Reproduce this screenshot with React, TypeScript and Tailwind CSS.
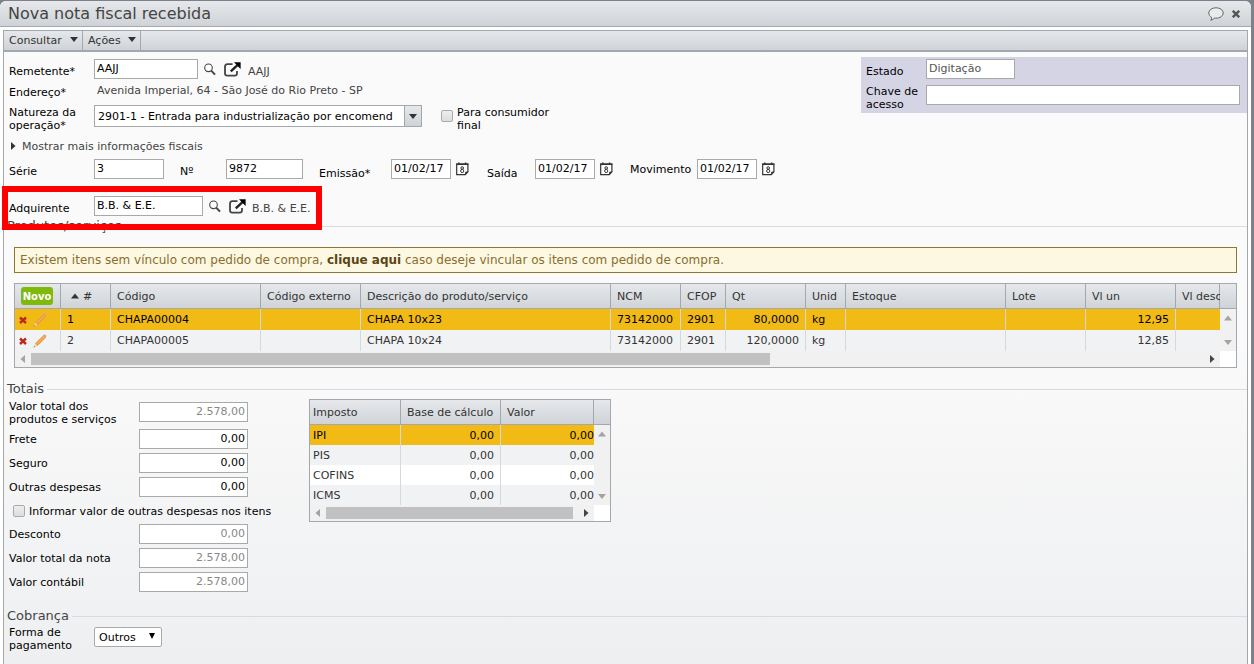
import { useState, type ReactNode } from 'react';
import clsx from 'clsx';

const productColumns = [
  { title: 'Código', width: 'w-[150px]' },
  { title: 'Código externo', width: 'w-[100px]' },
  { title: 'Descrição do produto/serviço', width: 'w-[250px]' },
  { title: 'NCM', width: 'w-[70px]' },
  { title: 'CFOP', width: 'w-[45px]' },
  { title: 'Qt', width: 'w-[80px]' },
  { title: 'Unid', width: 'w-[40px]' },
  { title: 'Estoque', width: 'w-[160px]' },
  { title: 'Lote', width: 'w-[80px]' },
  { title: 'Vl un', width: 'w-[90px]' },
  { title: 'Vl desc', width: '' },
];

const products = [
  ['1', 'CHAPA00004', '', 'CHAPA 10x23', '73142000', '2901', '80,0000', 'kg', '', '', '12,95', ''],
  ['2', 'CHAPA00005', '', 'CHAPA 10x24', '73142000', '2901', '120,0000', 'kg', '', '', '12,85', ''],
];

const taxes = ['IPI', 'PIS', 'COFINS', 'ICMS'];

const bar = 'bg-linear-to-b from-[#e6e8eb] to-[#cfd3d7]';
const field = 'h-5 border border-[#a9a9a9] bg-white px-0.5 pb-0.5 outline-none';

function Search() {
  return (
    <button type="button" aria-label="Pesquisar" className="shrink-0">
      <svg width="12" height="13" viewBox="0 0 12 13" fill="none" stroke="#444">
        <circle cx="4.5" cy="4.8" r="3.8" strokeWidth="1.1" fill="#fff" />
        <path d="M7.2 7.6 11 11.6" strokeWidth="2" />
      </svg>
    </button>
  );
}

function OpenExternal() {
  return (
    <button type="button" aria-label="Abrir cadastro" className="shrink-0">
      <svg width="17" height="15" viewBox="0 0 17 15" fill="none" stroke="#222">
        <path d="M8.5 2.2H3.4Q1 2.2 1 4.6v6.600q0 2.4 2.4 2.4h7.200q2.4 0 2.4-2.4V9" stroke="#444" strokeWidth="1.8" />
        <path d="M6.8 9.3 14 2.600" strokeWidth="2.4" />
        <path d="M10 0.3h6.600v6.600z" fill="#000" stroke="none" />
      </svg>
    </button>
  );
}

function Calendar({ label }: { label: string }) {
  return (
    <button type="button" aria-label={label} className="ml-[5px] shrink-0">
      <svg width="13" height="14" viewBox="0 0 13 14" fill="none" stroke="#333">
        <path d="M.7 2.2h11.2v7.6l-2.600 2.900H.7z" fill="#fff" strokeWidth="1.2" />
        <path d="M.2 2.2h12.2M2.8.4v2.4M9.6.4v2.4" strokeWidth="1.4" />
        <path d="m9.3 12.7.2-2.600 2.4-.3z" fill="#333" strokeWidth=".6" />
        <circle cx="6.2" cy="6" r="1.3" />
        <circle cx="6.2" cy="9" r="1.6" />
      </svg>
    </button>
  );
}

function Triangle({ dir, className }: { dir: 'up' | 'down' | 'left' | 'right'; className?: string }) {
  const points = {
    up: '0,6.5 4,1.5 8,6.5',
    down: '0,2 8,2 4,7',
    left: '6,0 6,8 1.5,4',
    right: '2,0 2,8 6.5,4',
  };
  return (
    <svg width="8" height="8" viewBox="0 0 8 8" className={clsx('shrink-0', className)} fill="currentColor">
      <polygon points={points[dir]} />
    </svg>
  );
}

function MenuButton({ children, className }: { children: ReactNode; className: string }) {
  return (
    <button
      type="button"
      className={clsx('flex items-center justify-between border-r border-[#a2a8ae] pr-1 pl-[5px] text-[#333]', className)}
    >
      {children}
      <svg width="8" height="6" viewBox="0 0 8 6" className="mb-0.5 fill-[#333]">
        <path d="M0 0h8L4 5z" />
      </svg>
    </button>
  );
}

function SectionTitle({ children, className }: { children: ReactNode; className?: string }) {
  return (
    <div className={clsx('flex h-4 items-center gap-[3px] pl-[3px]', className)}>
      <h2 className="text-[13px] leading-4 text-[#444]">{children}</h2>
      <div className="h-px flex-1 bg-[#d8dbdf]" />
    </div>
  );
}

function Checkbox({ id }: { id: string }) {
  return (
    <input
      id={id}
      type="checkbox"
      className="block size-3 shrink-0 appearance-none rounded-xs border border-[#aaa] bg-linear-to-b from-[#eee] to-[#ddd] checked:bg-[#888]"
    />
  );
}

function DateField({ id, label, labelClass }: { id: string; label: string; labelClass: string }) {
  return (
    <>
      <label htmlFor={id} className={clsx('shrink-0', labelClass)}>{label}</label>
      <input id={id} defaultValue="01/02/17" className={clsx(field, 'w-[60px]')} />
      <Calendar label={`Calendário ${label}`} />
    </>
  );
}

function AmountField({ id, label, value, disabled }: { id: string; label: string; value: string; disabled?: boolean }) {
  return (
    <div className="flex h-6">
      <label htmlFor={id} className="w-[130px] shrink-0 pt-1">{label}</label>
      <input
        id={id}
        defaultValue={value}
        disabled={disabled}
        className={clsx(field, 'w-[109px] text-right', disabled && 'text-[#888]')}
      />
    </div>
  );
}

function HorizontalScroll({ thumb }: { thumb: string }) {
  return (
    <div className="flex h-4 items-center bg-[#f1f1f1] px-1">
      <Triangle dir="left" className="text-[#a3a3a3]" />
      <div className="mx-1 flex h-3 flex-1">
        <div className={clsx('bg-[#c1c1c1]', thumb)} />
      </div>
      <Triangle dir="right" className="text-[#444]" />
    </div>
  );
}

function VerticalScroll() {
  return (
    <div className="flex w-4 shrink-0 flex-col">
      <div className={clsx('h-[25px] border-b border-[#a2a8ae]', bar)} />
      <div className="flex flex-1 flex-col items-center justify-between bg-[#f1f1f1] py-[5px] text-[#a3a3a3]">
        <Triangle dir="up" />
        <Triangle dir="down" />
      </div>
      <div className="h-4 bg-white" />
    </div>
  );
}

function ProductsTable() {
  const [selected, setSelected] = useState(0);
  const head = 'border-r border-b border-[#a2a8ae] px-1.5 text-left font-normal';
  const right = [6, 10];

  return (
    <div className="mx-2.5 mt-2.5 flex border border-[#a2a8ae] text-[#333]">
      <div className="min-w-0 flex-1">
        <table className="w-full table-fixed border-separate border-spacing-0 whitespace-nowrap">
          <thead>
            <tr className={clsx('h-[25px]', bar)}>
              <th className={clsx(head, 'w-[46px]')}>
                <button type="button" className="block h-[18px] w-8 rounded-[3px] bg-[#7fb90b] text-center text-[10px] font-bold text-white">
                  Novo
                </button>
              </th>
              <th className={clsx(head, 'w-[50px]')}>
                <span className="flex items-center gap-1 pl-1">
                  <Triangle dir="up" />#
                </span>
              </th>
              {productColumns.map((c) => (
                <th key={c.title} className={clsx(head, c.width)}>{c.title}</th>
              ))}
            </tr>
          </thead>
          <tbody>
            {products.map((row, i) => (
              <tr
                key={row[0]}
                onClick={() => setSelected(i)}
                className={clsx('h-[21px]', selected === i ? 'bg-[#f2ba14] text-black' : 'bg-[#f1f2f4]')}
              >
                <td className="border-r border-[#d5d8dc] pl-1">
                  <span className="flex items-center gap-1.5">
                    <button type="button" aria-label="Excluir item">
                      <svg width="8" height="8" viewBox="0 0 8 8" stroke="#b9291f" strokeWidth="2.4">
                        <path d="m1 1.5 6 5.5M7 1.5 1 7" />
                      </svg>
                    </button>
                    <button type="button" aria-label="Editar item">
                      <svg width="14" height="14" viewBox="0 0 14 14">
                        <path d="m.6 13.400 1.400-3.900 2.500 2.500z" fill="#f0d3a8" />
                        <path d="m.6 13.400.5-1.400.9.900z" fill="#666" />
                        <path d="m2 9.500 7.800-7.800 2.500 2.500L4.500 12z" fill="#ee9a3c" />
                        <path d="m3.200 10.700 7.800-7.800" stroke="#f7bd77" />
                        <path d="m9.800 1.700 1-1q.8-.5 1.900.4.900 1 .5 1.900l-.9 1.200z" fill="#df9c78" />
                      </svg>
                    </button>
                  </span>
                </td>
                {row.map((cell, n) => (
                  <td
                    key={n}
                    className={clsx(
                      'border-[#d5d8dc] px-1.5',
                      n < row.length - 1 && 'border-r',
                      right.includes(n) && 'text-right',
                    )}
                  >
                    {cell}
                  </td>
                ))}
              </tr>
            ))}
          </tbody>
        </table>
        <HorizontalScroll thumb="w-[63%]" />
      </div>
      <VerticalScroll />
    </div>
  );
}

function TaxTable() {
  const head = 'border-r border-b border-[#a2a8ae] text-left font-normal';

  return (
    <div className="ml-[61px] flex w-[302px] self-start border border-[#a2a8ae] text-[#333]">
      <div className="min-w-0 flex-1">
        <table className="w-full table-fixed border-separate border-spacing-0 whitespace-nowrap">
          <thead>
            <tr className={clsx('h-[25px]', bar)}>
              <th className={clsx(head, 'w-[91px] pl-[3px]')}>Imposto</th>
              <th className={clsx(head, 'w-[100px] pl-1.5')}>Base de cálculo</th>
              <th className={clsx(head, 'pl-1.5')}>Valor</th>
            </tr>
          </thead>
          <tbody>
            {taxes.map((tax, i) => (
              <tr
                key={tax}
                className={clsx('h-5', i === 0 ? 'bg-[#f2ba14] text-black' : i === 2 ? 'bg-white' : 'bg-[#f1f2f4]')}
              >
                <td className="border-r border-[#d5d8dc] pl-[3px]">{tax}</td>
                <td className="border-r border-[#d5d8dc] pr-1.5 text-right">0,00</td>
                <td className="text-right">0,00</td>
              </tr>
            ))}
          </tbody>
        </table>
        <HorizontalScroll thumb="w-[98%]" />
      </div>
      <VerticalScroll />
    </div>
  );
}

export default function App() {
  return (
    <div className="min-h-screen bg-[#7b828c] pt-px pr-[3px] font-['Verdana','DejaVu_Sans',sans-serif] text-[11px] leading-[13px] text-black">
      <div className="flex min-h-screen flex-col rounded-t-md bg-white">
        <header className={clsx('flex h-[26px] items-center justify-between rounded-t-md border-b border-[#a2a8ae] pr-[11px] pl-2', bar)}>
          <h1 className="text-[16px] leading-5 text-[#444]">Nova nota fiscal recebida</h1>
          <div className="flex items-center gap-2">
            <button type="button" aria-label="Comentários">
              <svg width="16" height="14" viewBox="0 0 16 14" fill="#e9ebed" stroke="#666">
                <path d="M8 .8c4 0 7.200 2.300 7.200 5.200S12 11.200 8 11.200q-.9 0-1.700-.1Q5 12.800 2.800 13.300q1-1.200.8-2.900C1.900 9.400.8 7.900.8 6 .8 3.100 4 .8 8 .8z" />
              </svg>
            </button>
            <button type="button" aria-label="Fechar">
              <svg width="8" height="8" viewBox="0 0 8 8" stroke="#555" strokeWidth="2.4">
                <path d="m.8.8 6.400 6.400M7.200.8.8 7.200" />
              </svg>
            </button>
          </div>
        </header>

        <main className="mx-[3px] mt-[3px] flex flex-1 flex-col border border-b-0 border-[#a2a8ae] bg-linear-to-b from-[#fafafa] from-50% to-[#eeeff1]">
          <nav className={clsx('flex h-[21px] border-b-2 border-[#a2a8ae]', bar)}>
            <MenuButton className="w-[79px]">Consultar</MenuButton>
            <MenuButton className="w-[58px]">Ações</MenuButton>
          </nav>

          <form>
            <div className="flex items-start justify-between">
              <div className="pt-[7px] pl-[5px]">
                <div className="flex h-5 items-center">
                  <label htmlFor="remetente" className="w-[85px] shrink-0 pt-1">Remetente*</label>
                  <input id="remetente" defaultValue="AAJJ" className={clsx(field, 'mr-1.5 w-[104px]')} />
                  <Search />
                  <span className="w-2" />
                  <OpenExternal />
                  <span className="pt-1 pl-[7px] text-[#444]">AAJJ</span>
                </div>
                <div className="mt-0.5 flex h-[18px] items-center">
                  <span className="w-[88px] pt-1">Endereço*</span>
                  <span className="text-[#444]">Avenida Imperial, 64 - São José do Rio Preto - SP</span>
                </div>
                <div className="mt-1.5 flex items-start">
                  <label htmlFor="natureza" className="w-[85px] shrink-0 pt-px">
                    Natureza da<br />operação*
                  </label>
                  <div className="relative w-[328px]">
                    <select id="natureza" className="h-[22px] w-full appearance-none border border-[#a2a8ae] bg-white pr-[18px] pl-[3px] outline-none">
                      <option>2901-1 - Entrada para industrialização por encomend</option>
                    </select>
                    <span className={clsx('pointer-events-none absolute top-px right-px flex h-5 w-[17px] items-center justify-center border-l border-[#a2a8ae]', bar)}>
                      <Triangle dir="down" className="text-[#333]" />
                    </span>
                  </div>
                  <span className="ml-[19px] pt-[5px]">
                    <Checkbox id="consumidor" />
                  </span>
                  <label htmlFor="consumidor" className="ml-1 w-[100px] pt-px">Para consumidor final</label>
                </div>
                <button type="button" className="mt-[5px] flex h-[18px] items-center gap-[5px] text-[#444]">
                  <Triangle dir="right" className="text-[#333]" />
                  Mostrar mais informações fiscais
                </button>
                <div className="mt-1 flex h-5 items-center">
                  <label htmlFor="serie" className="w-[85px] shrink-0 pt-1">Série</label>
                  <input id="serie" defaultValue="3" className={clsx(field, 'w-[70px]')} />
                  <label htmlFor="numero" className="ml-4 w-[46px] shrink-0 pt-1">Nº</label>
                  <input id="numero" defaultValue="9872" className={clsx(field, 'w-[77px]')} />
                  <DateField id="emissao" label="Emissão*" labelClass="ml-4 w-[72px] pt-2" />
                  <DateField id="saida" label="Saída" labelClass="ml-[18px] w-12 pt-2" />
                  <DateField id="movimento" label="Movimento" labelClass="ml-[17px] w-[67px]" />
                </div>
              </div>

              <div className="mt-[5px] w-[386px] shrink-0 bg-[#d5d4e5] pt-0.5 pr-[7px] pb-0.5 pl-[5px]">
                <div className="flex h-[26px]">
                  <label htmlFor="estado" className="w-[60px] shrink-0 pt-1.5">Estado</label>
                  <input id="estado" defaultValue="Digitação" disabled className={clsx(field, 'w-[89px] text-[#555]')} />
                </div>
                <div className="flex h-[26px]">
                  <label htmlFor="chave" className="w-[60px] shrink-0 whitespace-nowrap">
                    Chave de<br />acesso
                  </label>
                  <input id="chave" className={clsx(field, 'min-w-0 flex-1')} />
                </div>
              </div>
            </div>

            <div className="relative mt-[17px] flex h-5 items-center pl-[5px]">
              <label htmlFor="adquirente" className="w-[85px] shrink-0 pt-1">Adquirente</label>
              <input id="adquirente" defaultValue="B.B. & E.E." className={clsx(field, 'mr-1.5 w-[109px]')} />
              <Search />
              <span className="w-2" />
              <OpenExternal />
              <span className="pt-1 pl-1.5 text-[#444]">B.B. &amp; E.E.</span>
              <div className="pointer-events-none absolute -top-2.5 -left-0.5 h-11 w-80 border-[6px] border-[#fe0000]" />
            </div>

            <SectionTitle className="mt-0.5">Produtos/serviços</SectionTitle>

            <div className="mx-2.5 mt-[13px] flex h-[26px] items-center border border-[#8d7733] bg-[#fdf8e2] px-[5px] text-[12px] text-[#8a6d2f]">
              <p>
                Existem itens sem vínculo com pedido de compra,{' '}
                <a href="#vincular" className="font-bold text-[#5b4515]">clique aqui</a>{' '}
                caso deseje vincular os itens com pedido de compra.
              </p>
            </div>

            <ProductsTable />

            <SectionTitle className="mt-[13px]">Totais</SectionTitle>
            <div className="flex pt-0.5 pl-[5px]">
              <div>
                <div className="flex h-[30px] pt-px">
                  <label htmlFor="total-produtos" className="w-[130px]">
                    Valor total dos<br />produtos e serviços
                  </label>
                  <input
                    id="total-produtos"
                    defaultValue="2.578,00"
                    disabled
                    className={clsx(field, 'mt-0.5 w-[109px] text-right text-[#888]')}
                  />
                </div>
                <AmountField id="frete" label="Frete" value="0,00" />
                <AmountField id="seguro" label="Seguro" value="0,00" />
                <AmountField id="outras" label="Outras despesas" value="0,00" />
                <div className="flex h-[23px] items-start gap-1 pt-1 pl-1">
                  <Checkbox id="informar" />
                  <label htmlFor="informar" className="w-0 whitespace-nowrap">
                    Informar valor de outras despesas nos itens
                  </label>
                </div>
                <AmountField id="desconto" label="Desconto" value="0,00" disabled />
                <AmountField id="total-nota" label="Valor total da nota" value="2.578,00" disabled />
                <AmountField id="contabil" label="Valor contábil" value="2.578,00" disabled />
              </div>
              <TaxTable />
            </div>

            <SectionTitle className="mt-3">Cobrança</SectionTitle>
            <div className="flex items-start pt-0.5 pl-[5px]">
              <label htmlFor="forma" className="w-[85px]">
                Forma de<br />pagamento
              </label>
              <div className="relative mt-px">
                <select id="forma" className="h-5 w-[68px] appearance-none rounded-xs border border-[#a9a9a9] bg-white pl-1 outline-none">
                  <option>Outros</option>
                  <option>Boleto</option>
                </select>
                <svg width="6" height="7" viewBox="0 0 6 7" className="pointer-events-none absolute top-1.5 right-[7px]">
                  <path d="M0 0h6L3 6z" />
                </svg>
              </div>
            </div>
          </form>
        </main>
      </div>
    </div>
  );
}
